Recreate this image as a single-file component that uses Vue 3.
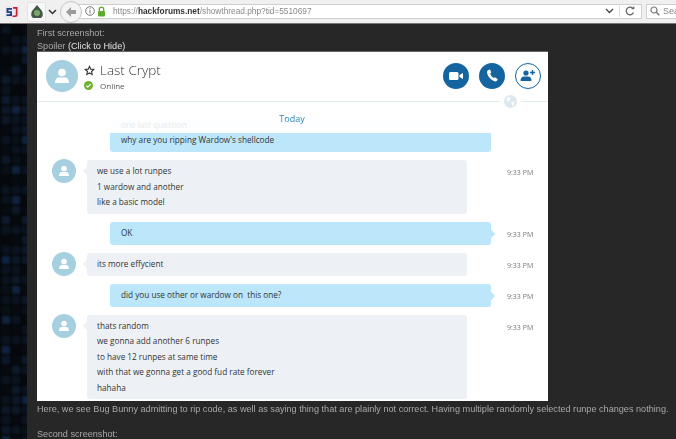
<script setup>
const messages = [
  { id: 1, out: false, lines: ['we use a lot runpes', '1 wardow and another', 'like a basic model'] },
  { id: 2, out: true, lines: ['OK'] },
  { id: 3, out: false, lines: ['its more effycient'] },
  { id: 4, out: true, lines: ['did you use other or wardow on  this one?'] },
  { id: 5, out: false, lines: ['thats random', 'we gonna add another 6 runpes', 'to have 12 runpes at same time', 'with that we gonna get a good fud rate forever', 'hahaha'] },
]

// background tiles of the forum page
const tileColors = ['#0a1420', '#060a10', '#0c1828', '#081018', '#0f2340', '#0a1320', '#05080c', '#070c12', '#0a1420', '#060a10', '#0d1a2c']
const tiles = Array.from({ length: 126 }, (_, i) => tileColors[(i * i * i + 5 * i + (i >> 2)) % 11])
</script>

<template>
  <div class="page">
    <div class="toolbar">
      <svg class="logo" width="16" height="16" viewBox="0 0 16 16">
        <rect x="1" y="2" width="14" height="12" rx="2" fill="#e8e8ee" />
        <path d="M2.500 4H8v1.800H4.500v1.400H8V12H2.500v-1.800H6V8.900H2.500z" fill="#27408b" />
        <path d="M9 3h4.500v7.500q0 2.500-2.500 2.500H8.500v-1.500H11q.8 0 .8-1V4.800H9z" fill="#c8202c" />
      </svg>
      <div class="addon">
        <svg width="14" height="16" viewBox="0 0 14 16">
          <path d="M7 1 12 7q2 5-1 7H3Q0 12 2 7z" fill="#41584a" />
          <circle cx="7" cy="9" r="3" fill="#7da56a" />
        </svg>
      </div>
      <svg class="chev" width="9" height="6" viewBox="0 0 9 6"><path d="M1 1l3.500 3.500L8 1" fill="none" stroke="#333" stroke-width="1.500" /></svg>
      <div class="back">
        <svg width="12" height="12" viewBox="0 0 12 12"><path d="M6 1 1 6l5 5V8h5V4H6z" fill="#9a9a9a" /></svg>
      </div>
      <div class="urlbar">
        <svg class="info" width="10" height="10" viewBox="0 0 10 10">
          <circle cx="5" cy="5" r="4.300" fill="none" stroke="#777" />
          <path d="M5 4v3.500M5 2.200v1" stroke="#777" />
        </svg>
        <svg class="lock" width="9" height="11" viewBox="0 0 9 11">
          <path d="M2.300 5V3.300a2.200 2.200 0 0 1 4.400 0V5" fill="none" stroke="#5cab2e" stroke-width="1.300" />
          <rect x="1" y="5" width="7" height="5.500" rx="1" fill="#5cab2e" />
        </svg>
        <span class="url">https://<b>hackforums.net</b>/showthread.php?tid=5510697</span>
        <svg class="chev url-chev" width="9" height="6" viewBox="0 0 9 6"><path d="M1 1l3.500 3.500L8 1" fill="none" stroke="#444" stroke-width="1.300" /></svg>
        <span class="sep"></span>
        <svg class="reload" width="10" height="10" viewBox="0 0 10 10">
          <path d="M8.500 6.500A3.800 3.800 0 1 1 7.800 2.400" fill="none" stroke="#666" stroke-width="1.300" />
          <path d="M6 3.300h3.300V0z" fill="#666" />
        </svg>
      </div>
      <div class="search">
        <svg width="10" height="10" viewBox="0 0 10 10">
          <circle cx="4" cy="4" r="3" fill="none" stroke="#777" stroke-width="1.200" />
          <path d="m6.300 6.300 3 3" stroke="#777" stroke-width="1.500" />
        </svg>
        <span>Sea</span>
      </div>
    </div>

    <div class="body">
      <div class="strip">
        <span v-for="(color, i) in tiles" :key="i" class="tile" :style="{ background: color }"></span>
      </div>
      <div class="post">
        <div class="post-line first">First screenshot:</div>
        <div class="post-line">Spoiler <span class="hide">(Click to Hide)</span></div>

        <div class="shot">
          <div class="chat-head">
            <div class="big-avatar">
              <svg width="20" height="20" viewBox="0 0 20 20">
                <circle cx="10" cy="6.500" r="3.800" fill="#fff" />
                <path d="M3 17q0-5.500 4-5.500h6q4 0 4 5.500z" fill="#fff" />
              </svg>
            </div>
            <div class="who">
              <div class="who-top">
                <svg width="11" height="11" viewBox="0 0 24 24">
                  <path d="m12 3 2.800 6 6.500.8-4.800 4.400 1.300 6.500L12 17.400l-5.800 3.300 1.300-6.500L2.700 9.800 9.200 9z" fill="none" stroke="#333" stroke-width="2.400" />
                </svg>
                <span class="who-name">Last Crypt</span>
              </div>
              <div class="who-status">
                <svg width="9" height="9" viewBox="0 0 9 9">
                  <circle cx="4.500" cy="4.500" r="4.500" fill="#6cb22c" />
                  <path d="m2.300 4.600 1.500 1.500 3-3" fill="none" stroke="#fff" stroke-width="1.200" />
                </svg>
                <span>Online</span>
              </div>
            </div>
            <div class="actions">
              <div class="round">
                <svg width="14" height="10" viewBox="0 0 14 10">
                  <rect x="0" y="1" width="9.500" height="8" rx="1.500" fill="#fff" />
                  <path d="M10.500 4 14 2v6l-3.500-2z" fill="#fff" />
                </svg>
              </div>
              <div class="round">
                <svg width="14" height="14" viewBox="0 0 14 14">
                  <path d="M3.200 1 5 .6l1.300 3-1.200 1q.6 2.600 3.600 4.500l1.300-.9 2.700 2-.7 1.600Q10.500 13.500 7 11 2.200 7.300 2 3.200q0-1.300 1.200-2.200z" fill="#fff" />
                </svg>
              </div>
              <div class="round ghost">
                <svg width="16" height="13" viewBox="0 0 16 13">
                  <circle cx="6" cy="4" r="2.600" fill="#14649f" />
                  <path d="M.5 12q0-4.500 3.500-4.500h4q3.500 0 3.500 4.500z" fill="#14649f" />
                  <path d="M12.500 1v5M10 3.500h5" stroke="#14649f" stroke-width="1.400" />
                </svg>
              </div>
            </div>
            <div class="globe">
              <svg width="13" height="13" viewBox="0 0 13 13">
                <circle cx="6.500" cy="6.500" r="6.500" fill="#dce8ef" />
                <path d="M3 2.500 6 2l.5 2.500L4.500 7 2.500 5zM7.500 7l3-.5-.5 3-2 2z" fill="#fff" />
              </svg>
            </div>
          </div>

          <div class="chat">
            <div class="today">Today</div>
            <div class="first-out">
              <div class="ghost-line">one last question</div>
              <div class="bubble-tail">why are you ripping Wardow's shellcode</div>
            </div>

            <div v-for="m in messages" :key="m.id" class="row" :class="{ out: m.out }">
              <div class="small-avatar">
                <svg v-if="!m.out" width="14" height="14" viewBox="0 0 20 20">
                  <circle cx="10" cy="6.500" r="4" fill="#fff" />
                  <path d="M3 17q0-5.500 4-5.500h6q4 0 4 5.500z" fill="#fff" />
                </svg>
              </div>
              <div class="bubble">
                <div v-for="line in m.lines" :key="line" class="line">{{ line }}</div>
              </div>
              <div class="time">9:33 PM</div>
            </div>
          </div>
        </div>

        <div class="post-line after">Here, we see Bug Bunny admitting to rip code, as well as saying thing that are plainly not correct. Having multiple randomly selected runpe changes nothing.</div>
        <div class="post-line second">Second screenshot:</div>
      </div>
    </div>
  </div>
</template>

<style>
html, body {
  margin: 0;
  background: #272727;
  overflow: hidden;
}
</style>

<style scoped>
.page {
  width: 676px;
  height: 439px;
  overflow: hidden;
  font-family: "Liberation Sans", Arial, sans-serif;
  background: #272727;
}

.toolbar {
  height: 24px;
  box-sizing: border-box;
  display: flex;
  align-items: center;
  background: #f0f0f0;
  border-bottom: 1px solid #777;
  padding-left: 4px;
}

.logo {
  margin-right: 7px;
  flex: none;
}

.addon {
  width: 19px;
  height: 20px;
  display: flex;
  align-items: center;
  justify-content: center;
  flex: none;
  background: #f7f7f7;
  border: 1px solid #e4e4e4;
  box-sizing: border-box;
}

.chev {
  margin-left: 2px;
  flex: none;
}

.back {
  width: 22px;
  height: 22px;
  margin-left: 3px;
  border: 1px solid #c6c6c6;
  border-radius: 50%;
  background: #f4f4f4;
  box-sizing: border-box;
  display: flex;
  align-items: center;
  justify-content: center;
  flex: none;
  z-index: 1;
}

.urlbar {
  width: 564px;
  height: 15px;
  margin-left: -4px;
  margin-top: -1px;
  box-sizing: border-box;
  display: flex;
  align-items: center;
  flex: none;
  background: #fff;
  border: 1px solid #cfcfcf;
  padding-left: 6px;
}

.info {
  margin-right: 2px;
}

.lock {
  margin-right: 7px;
}

.url {
  flex: 1;
  font-size: 8.300px;
  color: #8a8a8a;
  white-space: nowrap;
  filter: blur(0.35px);
}

.url b {
  color: #333;
  font-weight: 700;
}

.url-chev {
  margin-right: 5px;
}

.sep {
  width: 1px;
  height: 11px;
  background: #ddd;
  margin-right: 5px;
}

.reload {
  margin-right: 6px;
}

.search {
  flex: 1;
  height: 15px;
  margin-left: 4px;
  margin-top: -1px;
  box-sizing: border-box;
  display: flex;
  align-items: center;
  gap: 3px;
  background: #fff;
  border: 1px solid #cfcfcf;
  border-right: none;
  padding-left: 3px;
  font-size: 9px;
  color: #888;
  filter: blur(0.3px);
}

.body {
  display: flex;
  height: 415px;
}

.strip {
  width: 27px;
  flex: none;
  overflow: hidden;
  display: grid;
  grid-template-columns: repeat(3, 8px);
  grid-auto-rows: 8px;
  gap: 2px;
  padding: 2px 0 0 2px;
  box-sizing: border-box;
  background: #06090d;
}

.tile {
  display: block;
  border-radius: 1px;
  filter: blur(0.8px);
}

.post {
  flex: 1;
  min-width: 0;
  padding-left: 10px;
  font-size: 9.130px;
  color: #a8a8a8;
}

.post-line {
  height: 13px;
  line-height: 13px;
  white-space: nowrap;
  filter: blur(0.35px);
}

.first {
  margin-top: 3px;
}

.hide {
  color: #e0e0e0;
}

.shot {
  width: 511px;
  height: 350px;
  margin-top: -2px;
  background: #fff;
  border-top: 1px solid #666;
  box-sizing: border-box;
  overflow: hidden;
  font-family: "Open Sans", "Liberation Sans", sans-serif;
  color: #333;
}

.chat-head {
  position: relative;
  height: 50px;
  box-sizing: border-box;
  border-bottom: 1px solid #deecf0;
  display: flex;
  align-items: center;
  padding: 0 7px 2px 9px;
}

.big-avatar {
  width: 32px;
  height: 32px;
  border-radius: 50%;
  background: #a6cfe0;
  display: flex;
  align-items: center;
  justify-content: center;
}

.who {
  margin-left: 6px;
}

.who-top {
  display: flex;
  align-items: center;
  gap: 5px;
}

.who-name {
  font-size: 13.500px;
  font-weight: 300;
  line-height: 19px;
  color: #333;
  filter: blur(0.25px);
}

.who-status {
  display: flex;
  align-items: center;
  gap: 7px;
  font-size: 8px;
  line-height: 11px;
  color: #555;
  filter: blur(0.25px);
}

.actions {
  margin-left: auto;
  display: flex;
  gap: 10px;
}

.round {
  width: 26px;
  height: 26px;
  border-radius: 50%;
  background: #14649f;
  box-sizing: border-box;
  display: flex;
  align-items: center;
  justify-content: center;
}

.ghost {
  background: #fff;
  border: 1px solid #14649f;
}

.globe {
  position: absolute;
  right: 27px;
  bottom: -7px;
  padding: 0 4px;
  background: #fff;
  display: flex;
}

.chat {
  font-size: 8.200px;
  filter: blur(0.3px);
}

.today {
  position: relative;
  z-index: 1;
  text-align: center;
  width: 510px;
  margin-top: 11px;
  line-height: 12px;
  font-size: 9px;
  color: #2b84b8;
}

.first-out {
  position: relative;
  margin: -7px 0 8px 73px;
  width: 381px;
  height: 34px;
}

.ghost-line {
  height: 15px;
  padding: 1px 0 0 11px;
  box-sizing: border-box;
  line-height: 12px;
  color: #eaeaea;
  background: #fcfeff;
}

.bubble-tail {
  height: 19px;
  box-sizing: border-box;
  padding: 0 0 4px 11px;
  line-height: 13px;
  background: #bce6fa;
  border-radius: 0 0 3px 3px;
}

.row {
  display: flex;
  margin-bottom: 8px;
}

.small-avatar {
  width: 24px;
  height: 24px;
  margin: -1px 11px 0 15px;
  border-radius: 50%;
  flex: none;
  display: flex;
  align-items: center;
  justify-content: center;
  background: #a6cfe0;
}

.bubble {
  position: relative;
  width: 380px;
  box-sizing: border-box;
  padding: 3.300px 10px 4.300px;
  background: #edf1f6;
  border-radius: 3px;
}

.bubble::before {
  content: "";
  position: absolute;
  left: -3px;
  top: 8px;
  width: 6px;
  height: 6px;
  background: #edf1f6;
  transform: rotate(45deg);
}

.line {
  height: 15.400px;
  line-height: 15.400px;
  white-space: pre;
}

.out .small-avatar {
  background: none;
  margin: 0 0 0 38px;
  width: 35px;
  height: 0;
}

.out .bubble {
  width: 381px;
  padding-left: 11px;
  background: #bce6fa;
}

.out .bubble::before {
  left: auto;
  right: -3px;
  top: 9px;
  background: #bce6fa;
}

.time {
  width: 40px;
  margin-left: 40px;
  padding-top: 7px;
  font-size: 7px;
  line-height: 11px;
  color: #777;
  white-space: nowrap;
}

.out .time {
  margin-left: 16px;
}

.after {
  margin-top: 2px;
}

.second {
  margin-top: 12px;
}
</style>
